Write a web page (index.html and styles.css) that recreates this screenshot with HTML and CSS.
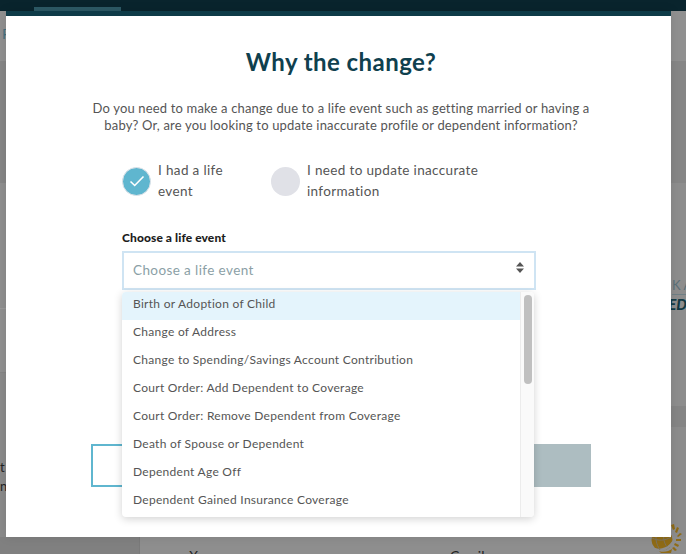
FILE: index.html
```html
<!DOCTYPE html>
<html lang="en">
<head>
<meta charset="utf-8">
<title>Why the change?</title>
<link rel="stylesheet" href="styles.css">
</head>
<body>
<div class="page">
  <div class="topbar"><span class="tab"></span></div>
  <div class="bg-main">
    <div class="bg-side">
      <div class="band band-a"><span class="peek-f">F</span></div>
      <div class="band band-b"></div>
      <div class="band band-c"></div>
      <div class="band band-d"></div>
      <div class="band band-e"><span class="peek-t">t<br>n</span></div>
    </div>
    <div class="bg-side">
      <div class="band band-a"></div>
      <div class="band band-b"></div>
      <div class="band band-f"><span class="peek-k">KA</span><span class="peek-ed">ED</span></div>
      <div class="band band-g"></div>
      <div class="band band-h"></div>
    </div>
  </div>
  <div class="bg-foot">
    <div class="foot-left"></div>
    <div class="foot-right"><span class="cross">X</span><span class="camila">Camila</span></div>
  </div>
  <svg class="sun" width="40" height="34" viewBox="0 0 40 34">
    <circle cx="16" cy="20" r="10.5" fill="#8f6b16"/>
    <path d="M8 29c8 3 16-1 21-10" fill="none" stroke="#8e8e8e" stroke-width="2.5"/>
    <path d="M6 18c6 3 13 3 19-1M11 12c-2 6-1 12 3 18M18 12c-1 6 0 11 3 15" fill="none" stroke="#7d7460" stroke-width="1"/>
    <path d="M13 31c5 2 10 0 13-2l-1 4H15z" fill="#8f6b16"/>
    <path d="M25 5l3-1 1 5-2 1zM31 7l2 1-2 5-2-1zM34 13l2 1-4 3-1-1zM35 19v2l-5 0v-2zM33 25l-1 2-4-2 1-2zM31 30l-2 1-3-3 2-1z" fill="#8f6b16"/>
  </svg>
  <section class="modal">
    <div class="intro-block">
      <h1 class="title">Why the change?</h1>
      <p class="intro">Do you need to make a change due to a life event such as getting married or having a baby? Or, are you looking to update inaccurate profile or dependent information?</p>
    </div>
    <div class="choices">
      <div class="choice choice-one">
        <span class="radio radio-on"><svg width="16" height="12" viewBox="0 0 16 12"><path d="M1.5 6.5l4.2 4L14.5 1.5" fill="none" stroke="#fff" stroke-width="1.6"/></svg></span>
        <span class="choice-text">I had a life event</span>
      </div>
      <div class="choice choice-two">
        <span class="radio"></span>
        <span class="choice-text">I need to update inaccurate information</span>
      </div>
    </div>
    <div class="field">
      <label class="label">Choose a life event</label>
      <div class="select">
        <span class="placeholder">Choose a life event</span>
        <svg class="updown" width="8" height="11" viewBox="0 0 8 11"><path d="M4 0l4 4.4H0zM4 11L0 6.6h8z" fill="#555"/></svg>
      </div>
    </div>
    <div class="actions">
      <div class="btn btn-back"></div>
      <div class="btn btn-next"></div>
    </div>
    <div class="menu">
      <ul class="options">
        <li class="option option-active">Birth or Adoption of Child</li>
        <li class="option">Change of Address</li>
        <li class="option">Change to Spending/Savings Account Contribution</li>
        <li class="option">Court Order: Add Dependent to Coverage</li>
        <li class="option">Court Order: Remove Dependent from Coverage</li>
        <li class="option">Death of Spouse or Dependent</li>
        <li class="option">Dependent Age Off</li>
        <li class="option">Dependent Gained Insurance Coverage</li>
      </ul>
      <div class="scrolltrack"><span class="thumb"></span></div>
    </div>
  </section>
</div>
</body>
</html>
```
FILE: styles.css
```css
* { box-sizing: border-box; }
html, body { margin: 0; padding: 0; }
body { font-family: "Lato", "Liberation Sans", sans-serif; background: #8e8e8e; }
.page { position: relative; width: 686px; height: 554px; overflow: hidden; display: flex; flex-direction: column; }
.topbar { height: 11px; flex: none; background: #09242d; padding-left: 34px; display: flex; align-items: flex-end; }
.tab { width: 87px; height: 4px; background: #2d5a66; }
.bg-main { height: 526px; flex: none; display: flex; justify-content: space-between; }
.bg-side { width: 140px; display: flex; flex-direction: column; }
.band { position: relative; overflow: hidden; flex: none; }
.band-a { height: 50px; background: #909090; }
.band-b { height: 122px; background: #868686; }
.band-c { height: 125px; background: #8f8f8f; }
.band-d { height: 64px; background: #909090; border-top: 1px solid #9a9a9a; }
.band-e { flex: 1; background: #8a8a8a; border-top: 1px solid #858585; }
.band-f { height: 223px; background: #8d8d8d; }
.band-g { height: 21px; background: #858585; }
.band-h { flex: 1; background: #8c8c8c; }
.peek-f { position: absolute; left: 2px; top: 14px; color: #45707f; font-size: 14px; }
.peek-t { position: absolute; left: 0; top: 85px; font-size: 13px; line-height: 19px; color: #222; }
.peek-k { position: absolute; right: -1px; top: 94px; width: 15px; padding-bottom: 1px; font-size: 13px; letter-spacing: 3px; color: #5c7078; white-space: nowrap; border-bottom: 1px solid #6f7f85; }
.peek-ed { position: absolute; right: -1px; top: 112px; font-size: 15px; font-weight: 900; font-style: italic; color: #123a45; }
.bg-foot { flex: 1; display: flex; overflow: hidden; }
.foot-left { width: 140px; background: #808080; border-right: 1px solid #7a7a7a; }
.foot-right { flex: 1; background: #8e8e8e; position: relative; }
.camila { position: absolute; left: 310px; top: 10px; font-size: 14px; color: #222; }
.cross { position: absolute; left: 49px; top: 10px; font-size: 14px; color: #222; }
.sun { position: absolute; left: 646px; top: 520px; }
.modal { position: absolute; left: 6px; top: 11px; width: 665px; height: 526px; background: #fff; border-top: 5px solid #0e3b48; box-shadow: 0 0 10px rgba(0,0,0,0.1); }
.intro-block { padding-left: 5px; }
.title { margin: 0; padding-top: 29px; text-align: center; font-size: 24px; line-height: 34px; font-weight: 700; letter-spacing: 0.45px; color: #0f404e; }
.intro { margin: 21px auto 0; width: 520px; text-align: center; font-size: 13px; line-height: 17px; color: #555; letter-spacing: 0.17px; }
.choices { margin: 26px 0 0 116px; display: flex; }
.choice { display: flex; align-items: center; }
.choice-one { width: 149px; }
.choice-two { width: 240px; }
.radio { width: 29px; height: 29px; border-radius: 50%; background: #e0e1e7; flex: none; display: flex; align-items: center; justify-content: center; margin-right: 7px; }
.radio-on { background: #5fb6cf; border: 1px solid #e2e4e9; }
.choice-text { font-size: 13.5px; line-height: 21px; color: #555; letter-spacing: 0.35px; }
.choice-one .choice-text { width: 90px; }
.field { margin: 28px 0 0 116px; width: 414px; }
.label { display: block; font-size: 12px; line-height: 15px; font-weight: 900; color: #1d1d1d; letter-spacing: 0.1px; }
.select { margin-top: 6px; height: 39px; border: 2px solid #cfe4f3; display: flex; align-items: center; justify-content: space-between; padding: 0 10px 2px 9px; }
.placeholder { font-size: 13.5px; color: #8b9fa6; letter-spacing: 0.4px; }
.updown { margin-top: -4px; }
.actions { position: absolute; left: 85px; top: 428px; width: 500px; height: 43px; display: flex; justify-content: space-between; }
.btn { height: 43px; }
.btn-back { width: 100px; border: 2px solid #5fb6cf; }
.btn-next { width: 200px; background: #adbdc1; }
.menu { position: absolute; left: 116px; top: 276px; width: 412px; height: 225px; background: #fff; border-radius: 4px; box-shadow: 0 2px 8px rgba(0,0,0,0.18); display: flex; overflow: hidden; }
.options { list-style: none; margin: 0; padding: 0; flex: 1; }
.option { height: 28px; line-height: 24px; padding-left: 11px; font-size: 12px; color: #555; letter-spacing: 0.28px; }
.option-active { background: #e4f4fc; }
.scrolltrack { width: 14px; background: #fafafa; border-left: 1px solid #ececec; padding: 3px 2px 3px 3px; flex: none; }
.thumb { display: block; width: 8px; height: 89px; border-radius: 4px; background: #c0c0c0; }
```
